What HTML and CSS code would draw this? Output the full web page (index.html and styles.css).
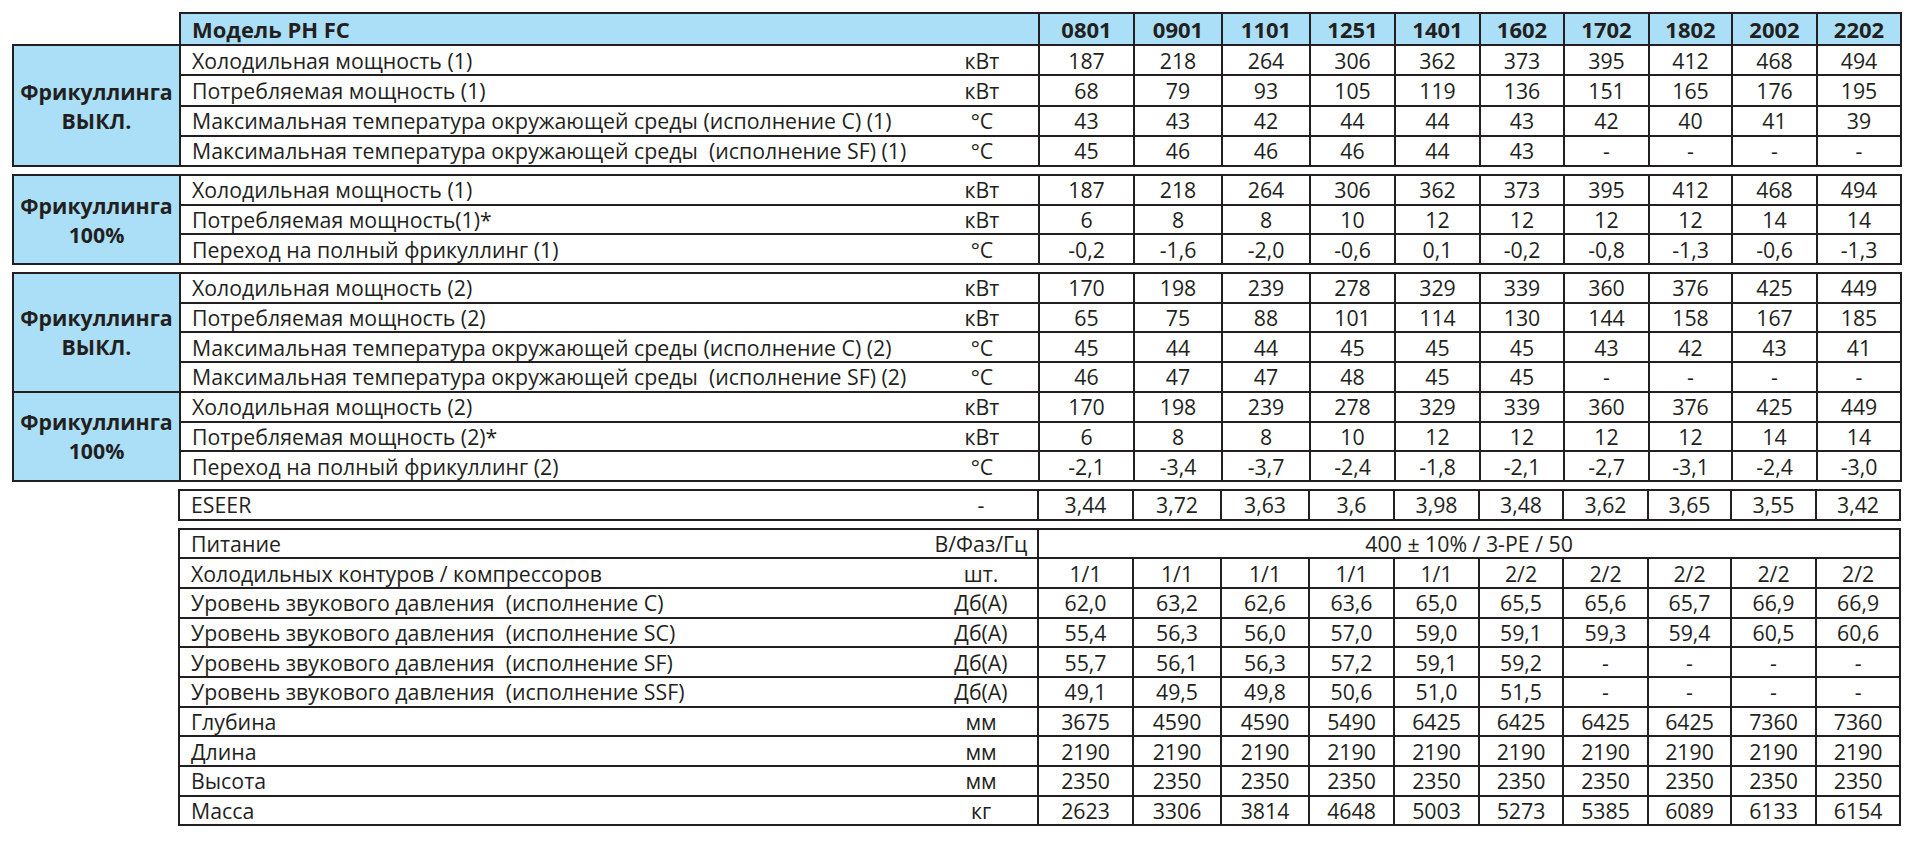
FILE: index.html
```html
<!DOCTYPE html>
<html lang="ru">
<head>
<meta charset="utf-8">
<title>Модель PH FC</title>
<link rel="stylesheet" href="styles.css">
</head>
<body>
<div class="sheet">

<table class="spec">
<colgroup><col class="c-group"><col class="c-label"><col class="c-unit"><col class="c-d1"><col class="c-d2"><col class="c-d3"><col class="c-d4"><col class="c-d5"><col class="c-d6"><col class="c-d7"><col class="c-d8"><col class="c-d9"><col class="c-d10"></colgroup>
<tr class="head">
<td class="blank"></td><td class="model" colspan="2">Модель PH FC</td>
<td>0801</td><td>0901</td><td>1101</td><td>1251</td><td>1401</td><td>1602</td><td>1702</td><td>1802</td><td>2002</td><td>2202</td>
</tr>
<tr class="r30">
<td class="group" rowspan="4">Фрикуллинга<br>ВЫКЛ.</td>
<td class="label">Холодильная мощность (1)</td><td class="unit">кВт</td>
<td>187</td><td>218</td><td>264</td><td>306</td><td>362</td><td>373</td><td>395</td><td>412</td><td>468</td><td>494</td>
</tr>
<tr class="r30">
<td class="label">Потребляемая мощность (1)</td><td class="unit">кВт</td>
<td>68</td><td>79</td><td>93</td><td>105</td><td>119</td><td>136</td><td>151</td><td>165</td><td>176</td><td>195</td>
</tr>
<tr class="r30">
<td class="label">Максимальная температура окружающей среды (исполнение С) (1)</td><td class="unit">°C</td>
<td>43</td><td>43</td><td>42</td><td>44</td><td>44</td><td>43</td><td>42</td><td>40</td><td>41</td><td>39</td>
</tr>
<tr class="r30">
<td class="label">Максимальная температура окружающей среды &nbsp;(исполнение SF) (1)</td><td class="unit">°C</td>
<td>45</td><td>46</td><td>46</td><td>46</td><td>44</td><td>43</td><td>-</td><td>-</td><td>-</td><td>-</td>
</tr>
</table>

<table class="spec">
<colgroup><col class="c-group"><col class="c-label"><col class="c-unit"><col class="c-d1"><col class="c-d2"><col class="c-d3"><col class="c-d4"><col class="c-d5"><col class="c-d6"><col class="c-d7"><col class="c-d8"><col class="c-d9"><col class="c-d10"></colgroup>
<tr>
<td class="group" rowspan="3">Фрикуллинга<br>100%</td>
<td class="label">Холодильная мощность (1)</td><td class="unit">кВт</td>
<td>187</td><td>218</td><td>264</td><td>306</td><td>362</td><td>373</td><td>395</td><td>412</td><td>468</td><td>494</td>
</tr>
<tr class="thin">
<td class="label">Потребляемая мощность(1)*</td><td class="unit">кВт</td>
<td>6</td><td>8</td><td>8</td><td>10</td><td>12</td><td>12</td><td>12</td><td>12</td><td>14</td><td>14</td>
</tr>
<tr class="thin">
<td class="label">Переход на полный фрикуллинг (1)</td><td class="unit">°C</td>
<td>-0,2</td><td>-1,6</td><td>-2,0</td><td>-0,6</td><td>0,1</td><td>-0,2</td><td>-0,8</td><td>-1,3</td><td>-0,6</td><td>-1,3</td>
</tr>
</table>

<table class="spec">
<colgroup><col class="c-group"><col class="c-label"><col class="c-unit"><col class="c-d1"><col class="c-d2"><col class="c-d3"><col class="c-d4"><col class="c-d5"><col class="c-d6"><col class="c-d7"><col class="c-d8"><col class="c-d9"><col class="c-d10"></colgroup>
<tr>
<td class="group" rowspan="4">Фрикуллинга<br>ВЫКЛ.</td>
<td class="label">Холодильная мощность (2)</td><td class="unit">кВт</td>
<td>170</td><td>198</td><td>239</td><td>278</td><td>329</td><td>339</td><td>360</td><td>376</td><td>425</td><td>449</td>
</tr>
<tr>
<td class="label">Потребляемая мощность (2)</td><td class="unit">кВт</td>
<td>65</td><td>75</td><td>88</td><td>101</td><td>114</td><td>130</td><td>144</td><td>158</td><td>167</td><td>185</td>
</tr>
<tr>
<td class="label">Максимальная температура окружающей среды (исполнение С) (2)</td><td class="unit">°C</td>
<td>45</td><td>44</td><td>44</td><td>45</td><td>45</td><td>45</td><td>43</td><td>42</td><td>43</td><td>41</td>
</tr>
<tr>
<td class="label">Максимальная температура окружающей среды &nbsp;(исполнение SF) (2)</td><td class="unit">°C</td>
<td>46</td><td>47</td><td>47</td><td>48</td><td>45</td><td>45</td><td>-</td><td>-</td><td>-</td><td>-</td>
</tr>
<tr>
<td class="group" rowspan="3">Фрикуллинга<br>100%</td>
<td class="label">Холодильная мощность (2)</td><td class="unit">кВт</td>
<td>170</td><td>198</td><td>239</td><td>278</td><td>329</td><td>339</td><td>360</td><td>376</td><td>425</td><td>449</td>
</tr>
<tr class="thin">
<td class="label">Потребляемая мощность (2)*</td><td class="unit">кВт</td>
<td>6</td><td>8</td><td>8</td><td>10</td><td>12</td><td>12</td><td>12</td><td>12</td><td>14</td><td>14</td>
</tr>
<tr class="thin">
<td class="label">Переход на полный фрикуллинг (2)</td><td class="unit">°C</td>
<td>-2,1</td><td>-3,4</td><td>-3,7</td><td>-2,4</td><td>-1,8</td><td>-2,1</td><td>-2,7</td><td>-3,1</td><td>-2,4</td><td>-3,0</td>
</tr>
</table>

<table class="spec">
<colgroup><col class="c-group"><col class="c-label"><col class="c-unit"><col class="c-d1"><col class="c-d2"><col class="c-d3"><col class="c-d4"><col class="c-d5"><col class="c-d6"><col class="c-d7"><col class="c-d8"><col class="c-d9"><col class="c-d10"></colgroup>
<tr>
<td class="blank"></td>
<td class="label">ESEER</td><td class="unit">-</td>
<td>3,44</td><td>3,72</td><td>3,63</td><td>3,6</td><td>3,98</td><td>3,48</td><td>3,62</td><td>3,65</td><td>3,55</td><td>3,42</td>
</tr>
</table>

<table class="spec">
<colgroup><col class="c-group"><col class="c-label"><col class="c-unit"><col class="c-d1"><col class="c-d2"><col class="c-d3"><col class="c-d4"><col class="c-d5"><col class="c-d6"><col class="c-d7"><col class="c-d8"><col class="c-d9"><col class="c-d10"></colgroup>
<tr>
<td class="blank"></td>
<td class="label">Питание</td><td class="unit unit-wide">В/Фаз/Гц</td>
<td colspan="10">400 ± 10% / 3-PE / 50</td>
</tr>
<tr>
<td class="blank"></td>
<td class="label">Холодильных контуров / компрессоров</td><td class="unit">шт.</td>
<td>1/1</td><td>1/1</td><td>1/1</td><td>1/1</td><td>1/1</td><td>2/2</td><td>2/2</td><td>2/2</td><td>2/2</td><td>2/2</td>
</tr>
<tr>
<td class="blank"></td>
<td class="label">Уровень звукового давления &nbsp;(исполнение С)</td><td class="unit">Дб(А)</td>
<td>62,0</td><td>63,2</td><td>62,6</td><td>63,6</td><td>65,0</td><td>65,5</td><td>65,6</td><td>65,7</td><td>66,9</td><td>66,9</td>
</tr>
<tr>
<td class="blank"></td>
<td class="label">Уровень звукового давления &nbsp;(исполнение SC)</td><td class="unit">Дб(А)</td>
<td>55,4</td><td>56,3</td><td>56,0</td><td>57,0</td><td>59,0</td><td>59,1</td><td>59,3</td><td>59,4</td><td>60,5</td><td>60,6</td>
</tr>
<tr>
<td class="blank"></td>
<td class="label">Уровень звукового давления &nbsp;(исполнение SF)</td><td class="unit">Дб(А)</td>
<td>55,7</td><td>56,1</td><td>56,3</td><td>57,2</td><td>59,1</td><td>59,2</td><td>-</td><td>-</td><td>-</td><td>-</td>
</tr>
<tr>
<td class="blank"></td>
<td class="label">Уровень звукового давления &nbsp;(исполнение SSF)</td><td class="unit">Дб(А)</td>
<td>49,1</td><td>49,5</td><td>49,8</td><td>50,6</td><td>51,0</td><td>51,5</td><td>-</td><td>-</td><td>-</td><td>-</td>
</tr>
<tr>
<td class="blank"></td>
<td class="label">Глубина</td><td class="unit">мм</td>
<td>3675</td><td>4590</td><td>4590</td><td>5490</td><td>6425</td><td>6425</td><td>6425</td><td>6425</td><td>7360</td><td>7360</td>
</tr>
<tr>
<td class="blank"></td>
<td class="label">Длина</td><td class="unit">мм</td>
<td>2190</td><td>2190</td><td>2190</td><td>2190</td><td>2190</td><td>2190</td><td>2190</td><td>2190</td><td>2190</td><td>2190</td>
</tr>
<tr>
<td class="blank"></td>
<td class="label">Высота</td><td class="unit">мм</td>
<td>2350</td><td>2350</td><td>2350</td><td>2350</td><td>2350</td><td>2350</td><td>2350</td><td>2350</td><td>2350</td><td>2350</td>
</tr>
<tr>
<td class="blank"></td>
<td class="label">Масса</td><td class="unit">кг</td>
<td>2623</td><td>3306</td><td>3814</td><td>4648</td><td>5003</td><td>5273</td><td>5385</td><td>6089</td><td>6133</td><td>6154</td>
</tr>
</table>

</div>
</body>
</html>
```

FILE: styles.css
```css
html, body {
  margin: 0;
  padding: 0;
  background: #ffffff;
}

body {
  font-family: "Open Sans", "Liberation Sans", sans-serif;
  color: #231f20;
}

.sheet {
  display: flex;
  flex-direction: column;
  gap: 7px;
  padding: 12px 0 0 12px;
}

.spec {
  border-collapse: collapse;
  table-layout: fixed;
  width: 1888px;
  font-size: 21.3px;
}

.c-group { width: 167px; }
.c-label { width: 746px; }
.c-unit { width: 113px; }
.c-d1 { width: 95px; }
.c-d2 { width: 88px; }
.c-d3 { width: 88px; }
.c-d4 { width: 85px; }
.c-d5 { width: 85px; }
.c-d6 { width: 84px; }
.c-d7 { width: 85px; }
.c-d8 { width: 83px; }
.c-d9 { width: 85px; }
.c-d10 { width: 84px; }

.spec td {
  border: 2px solid #231f20;
  padding: 0;
  height: 27.7px;
  line-height: 27px;
  text-align: center;
  white-space: nowrap;
  overflow: visible;
}

.spec tr.r30 td {
  height: 28.25px;
}

.spec tr.thin td {
  border-top-width: 1px;
}

.spec tr.head td {
  height: 30px;
  background: #abdff7;
  font-weight: 700;
  font-size: 22px;
}

.spec tr.head td.blank,
.spec td.blank {
  border: none;
  background: transparent;
}

.spec td.group {
  background: #abdff7;
  font-weight: 700;
  line-height: 29px;
}

.spec td.label,
.spec td.model {
  text-align: left;
  padding-left: 11px;
}

.spec td.label {
  border-right: none;
}

.spec td.unit {
  border-left: none;
}
```
